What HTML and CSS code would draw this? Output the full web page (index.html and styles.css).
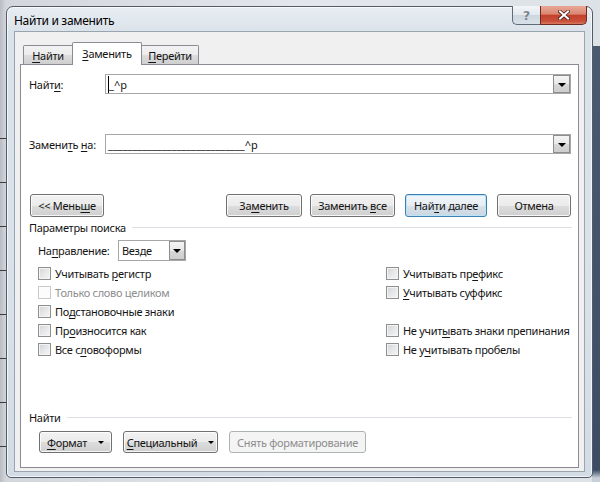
FILE: index.html
```html
<!DOCTYPE html>
<html lang="ru">
<head>
<meta charset="utf-8">
<title>Найти и заменить</title>
<link rel="stylesheet" href="styles.css">
</head>
<body>
<div class="window">
  <div class="titlebar">
    <span class="title">Найти и заменить</span>
    <div class="caption-btns">
      <div class="cap help">?</div>
      <div class="cap close">
        <svg width="12" height="10" viewBox="0 0 12 10"><path d="M2 1.5 L10 8.5 M10 1.5 L2 8.5" stroke="#4a1d17" stroke-width="3.6" stroke-linecap="square"/><path d="M2 1.5 L10 8.5 M10 1.5 L2 8.5" stroke="#fff" stroke-width="2" stroke-linecap="square"/></svg>
      </div>
    </div>
  </div>
  <div class="client">
    <div class="tabs">
      <div class="tab tab-first"><span><u>Н</u>айти</span></div>
      <div class="tab active"><span><u>З</u>аменить</span></div>
      <div class="tab tab-last"><span><u>П</u>ерейти</span></div>
    </div>
    <div class="panel">
      <div class="field-row row-find">
        <span class="label">Найт<u>и</u>:</span>
        <div class="combo">
          <span class="combo-text"><span class="caret"></span><span>_^p</span></span>
          <span class="drop"><span class="tri"></span></span>
        </div>
      </div>
      <div class="field-row row-replace">
        <span class="label">Замени<u>т</u>ь <u>н</u>а:</span>
        <div class="combo">
          <span class="combo-text"><span>____________________________^p</span></span>
          <span class="drop"><span class="tri"></span></span>
        </div>
      </div>
      <div class="btn-row">
        <div class="btn w-less"><span>&lt;&lt; Мень<u>ш</u>е</span></div>
        <div class="btn w-repl push"><span>За<u>м</u>енить</span></div>
        <div class="btn w-all"><span>Заменить <u>в</u>се</span></div>
        <div class="btn w-next default"><span>Най<u>т</u>и далее</span></div>
        <div class="btn w-cancel"><span>Отмена</span></div>
      </div>
      <div class="group-head"><span>Параметры поиска</span></div>
      <div class="dir-row">
        <span class="dir-label">На<u>п</u>равление:</span>
        <div class="select">
          <span class="select-text">Везде</span>
          <span class="sdrop"><span class="tri"></span></span>
        </div>
      </div>
      <div class="options">
        <div class="opt"><span class="cb"></span><span>Учитывать <u>р</u>егистр</span></div>
        <div class="opt"><span class="cb"></span><span>Учитывать пр<u>е</u>фикс</span></div>
        <div class="opt disabled"><span class="cb"></span><span>Только слово целиком</span></div>
        <div class="opt"><span class="cb"></span><span><u>У</u>читывать суффикс</span></div>
        <div class="opt"><span class="cb"></span><span>По<u>д</u>становочные знаки</span></div>
        <div class="opt"></div>
        <div class="opt"><span class="cb"></span><span>Пр<u>о</u>износится как</span></div>
        <div class="opt"><span class="cb"></span><span>Не учит<u>ы</u>вать знаки препинания</span></div>
        <div class="opt"><span class="cb"></span><span>Все с<u>л</u>овоформы</span></div>
        <div class="opt"><span class="cb"></span><span>Не у<u>ч</u>итывать пробелы</span></div>
      </div>
      <div class="bottom">
        <div class="group-head group-find"><span>Найти</span></div>
        <div class="bottom-btns">
          <div class="btn w-fmt"><span><u>Ф</u>ормат</span><span class="mini-tri"></span></div>
          <div class="btn w-spec"><span><u>С</u>пециальный</span><span class="mini-tri"></span></div>
          <div class="btn w-clear disabled-btn"><span>Снять форматирование</span></div>
        </div>
      </div>
    </div>
  </div>
</div>
</body>
</html>
```

FILE: styles.css
```css
html, body {
  margin: 0;
  padding: 0;
}

body {
  width: 600px;
  height: 482px;
  overflow: hidden;
  position: relative;
  font-family: "Noto Sans", "Open Sans", sans-serif;
  font-size: 11px;
  letter-spacing: -0.3px;
  color: #141414;
  background:
    linear-gradient(to bottom, transparent 46px, #4a5a72 46px, #3d4c63 470px, #c9cfd6 478px) right top / 8px 100% no-repeat,
    repeating-linear-gradient(to bottom, transparent 0, transparent 38px, #3b3b3b 38px, #3b3b3b 39px, transparent 39px, transparent 44px) left 100px / 6px 380px no-repeat,
    linear-gradient(to right, #b9bdc3 0, #d3d7dc 6px, #e3e7eb 50%, #dde2e7 100%);
}

u {
  text-decoration: underline;
  text-underline-offset: 2px;
}

/* ---------- window frame ---------- */
.window {
  position: absolute;
  left: 6px;
  top: 6px;
  width: 587px;
  height: 472px;
  box-sizing: border-box;
  border: 1px solid #525c68;
  border-radius: 7px 7px 5px 5px;
  background: linear-gradient(to bottom, #e7edf2 0, #dbe3ea 24px, #d9e1e9 60%, #d3dce5 100%);
  box-shadow: inset 0 0 0 1px rgba(255, 255, 255, 0.7);
  padding: 0 7px 5px 7px;
  display: flex;
  flex-direction: column;
}

.titlebar {
  height: 24px;
  display: flex;
  align-items: flex-start;
  flex: none;
}

.title {
  font-size: 12px;
  line-height: 16px;
  padding-top: 6px;
  color: #000;
}

.caption-btns {
  margin-left: auto;
  margin-right: -2px;
  display: flex;
  margin-top: -1px;
}

.cap {
  height: 19px;
  box-sizing: border-box;
  border: 1px solid #5f6b79;
  border-top: none;
  display: flex;
  align-items: center;
  justify-content: center;
}

.help {
  width: 28px;
  border-right: none;
  border-radius: 0 0 0 5px;
  background: linear-gradient(to bottom, #f2f5f8 0, #e3e9ef 50%, #cdd6df 51%, #d9e1e8 100%);
  color: #7d8590;
  font-family: "DejaVu Sans", sans-serif;
  font-size: 13px;
  font-weight: bold;
  letter-spacing: 0;
  text-shadow: 0 0 1px #fff;
}

.close {
  width: 47px;
  border-radius: 0 0 5px 0;
  background: linear-gradient(to bottom, #e9a797 0, #d98771 45%, #c3412c 52%, #c9503a 85%, #d97a5f 100%);
  border-color: #6e2a21;
}

/* ---------- client area ---------- */
.client {
  flex: 1;
  box-sizing: border-box;
  border: 1px solid #9aa4ae;
  background: #f0f0f0;
  padding: 10px 5px 3px 5px;
  display: flex;
  flex-direction: column;
}

.tabs {
  display: flex;
  height: 22px;
  align-items: flex-end;
  padding-left: 3px;
  position: relative;
  z-index: 2;
  flex: none;
}

.tab {
  box-sizing: border-box;
  height: 19px;
  border: 1px solid #898c95;
  border-bottom: none;
  background: linear-gradient(to bottom, #f3f3f3 0, #ebebeb 50%, #dddddd 51%, #cfcfcf 100%);
  display: flex;
  align-items: center;
  justify-content: center;
  padding-top: 1px;
}

.tab-first {
  width: 50px;
  border-radius: 2px 0 0 0;
}

.tab-last {
  width: 58px;
  margin-left: -1px;
  border-radius: 0 2px 0 0;
}

.tab.active {
  width: 70px;
  height: 23px;
  margin-left: -1px;
  margin-bottom: -1px;
  background: #fff;
  border-radius: 2px 2px 0 0;
  position: relative;
  z-index: 3;
  padding-top: 0;
  padding-bottom: 2px;
}

.panel {
  flex: 1;
  box-sizing: border-box;
  border: 1px solid #898c95;
  background: #fff;
  padding: 0 7px 14px 8px;
  display: flex;
  flex-direction: column;
}

/* ---------- find / replace fields ---------- */
.field-row {
  display: flex;
  align-items: center;
  height: 20px;
}

.row-find {
  margin-top: 9px;
}

.row-replace {
  margin-top: 40px;
}

.label {
  width: 76px;
  flex: none;
}

.combo {
  flex: 1;
  height: 20px;
  box-sizing: border-box;
  border: 1px solid #a7a7a7;
  display: flex;
  align-items: center;
  background: #fff;
}

.combo-text {
  flex: 1;
  padding-left: 2px;
  display: flex;
  align-items: center;
  white-space: pre;
  letter-spacing: 0;
}

.caret {
  width: 1px;
  height: 17px;
  background: #000;
  margin-top: 1px;
}

.drop {
  width: 17px;
  height: 18px;
  box-sizing: border-box;
  border: 1px solid #8d8d8d;
  background: linear-gradient(to bottom, #f4f4f4 0, #e8e8e8 50%, #d8d8d8 51%, #cdcdcd 100%);
  display: flex;
  align-items: center;
  justify-content: center;
}

.tri {
  width: 0;
  height: 0;
  border-left: 4px solid transparent;
  border-right: 4px solid transparent;
  border-top: 4px solid #000;
  margin-top: 1px;
}

/* ---------- buttons ---------- */
.btn-row {
  display: flex;
  margin-top: 40px;
  padding-left: 1px;
}

.btn {
  box-sizing: border-box;
  height: 23px;
  border: 1px solid #707070;
  border-radius: 3px;
  background: linear-gradient(to bottom, #f2f2f2 0, #ebebeb 50%, #dddddd 51%, #cfcfcf 100%);
  box-shadow: inset 0 0 0 1px rgba(255, 255, 255, 0.8);
  display: flex;
  align-items: center;
  justify-content: center;
  white-space: nowrap;
  flex: none;
}

.btn.default {
  border-color: #3c7fb1;
  box-shadow: inset 0 0 0 1px #bde3f7;
  background: linear-gradient(to bottom, #f0f5f8 0, #e7eef3 50%, #d7e2ea 51%, #cbd7e1 100%);
}

.w-less { width: 74px; }
.w-repl { width: 76px; }
.w-all { width: 85px; margin-left: 8px; }
.w-next { width: 82px; margin-left: 10px; }
.w-cancel { width: 74px; margin-left: 10px; }
.push { margin-left: auto; }

/* ---------- group headers ---------- */
.group-head {
  display: flex;
  align-items: center;
  height: 16px;
  margin-top: 2px;
}

.group-head::after {
  content: "";
  flex: 1;
  height: 1px;
  background: #dcdfe3;
  margin-left: 6px;
  margin-right: -1px;
}

/* ---------- direction ---------- */
.dir-row {
  display: flex;
  align-items: center;
  height: 21px;
  margin-top: 5px;
  padding-left: 9px;
}

.dir-label {
  width: 80px;
}

.select {
  width: 68px;
  height: 21px;
  box-sizing: border-box;
  border: 1px solid #a7a7a7;
  display: flex;
  align-items: center;
}

.select-text {
  flex: 1;
  padding-left: 3px;
}

.sdrop {
  width: 16px;
  height: 19px;
  box-sizing: border-box;
  border: 1px solid #8d8d8d;
  background: linear-gradient(to bottom, #f4f4f4 0, #e8e8e8 50%, #d8d8d8 51%, #cdcdcd 100%);
  display: flex;
  align-items: center;
  justify-content: center;
}

/* ---------- options ---------- */
.options {
  display: grid;
  grid-template-columns: 348px 1fr;
  grid-auto-rows: 19px;
  margin-top: 3px;
  padding-left: 9px;
}

.opt {
  display: flex;
  align-items: center;
  white-space: nowrap;
}

.cb {
  width: 13px;
  height: 13px;
  box-sizing: border-box;
  border: 1px solid #8f8f8f;
  background: linear-gradient(135deg, #d2d4d7 0, #e6e7e9 50%, #f6f6f6 100%);
  box-shadow: inset 0 0 0 1px #f4f4f4;
  margin-right: 4px;
  flex: none;
}

.opt.disabled {
  color: #8d8d8d;
}

.opt.disabled .cb {
  border-color: #c9cacb;
  background: #fcfcfc;
  box-shadow: none;
}

/* ---------- bottom ---------- */
.bottom {
  margin-top: auto;
}

.group-find {
  margin-top: 0;
}

.bottom-btns {
  display: flex;
  margin-top: 6px;
  padding-left: 10px;
}

.bottom-btns .btn {
  height: 22px;
}

.w-fmt { width: 73px; }
.w-spec { width: 95px; margin-left: 11px; }
.w-clear { width: 137px; margin-left: 11px; }

.mini-tri {
  width: 0;
  height: 0;
  border-left: 3px solid transparent;
  border-right: 3px solid transparent;
  border-top: 3px solid #000;
  margin-left: 11px;
  margin-top: 1px;
}

.disabled-btn {
  border-color: #adb2b5;
  background: #f4f4f4;
  box-shadow: none;
  color: #8d8d8d;
}
```
